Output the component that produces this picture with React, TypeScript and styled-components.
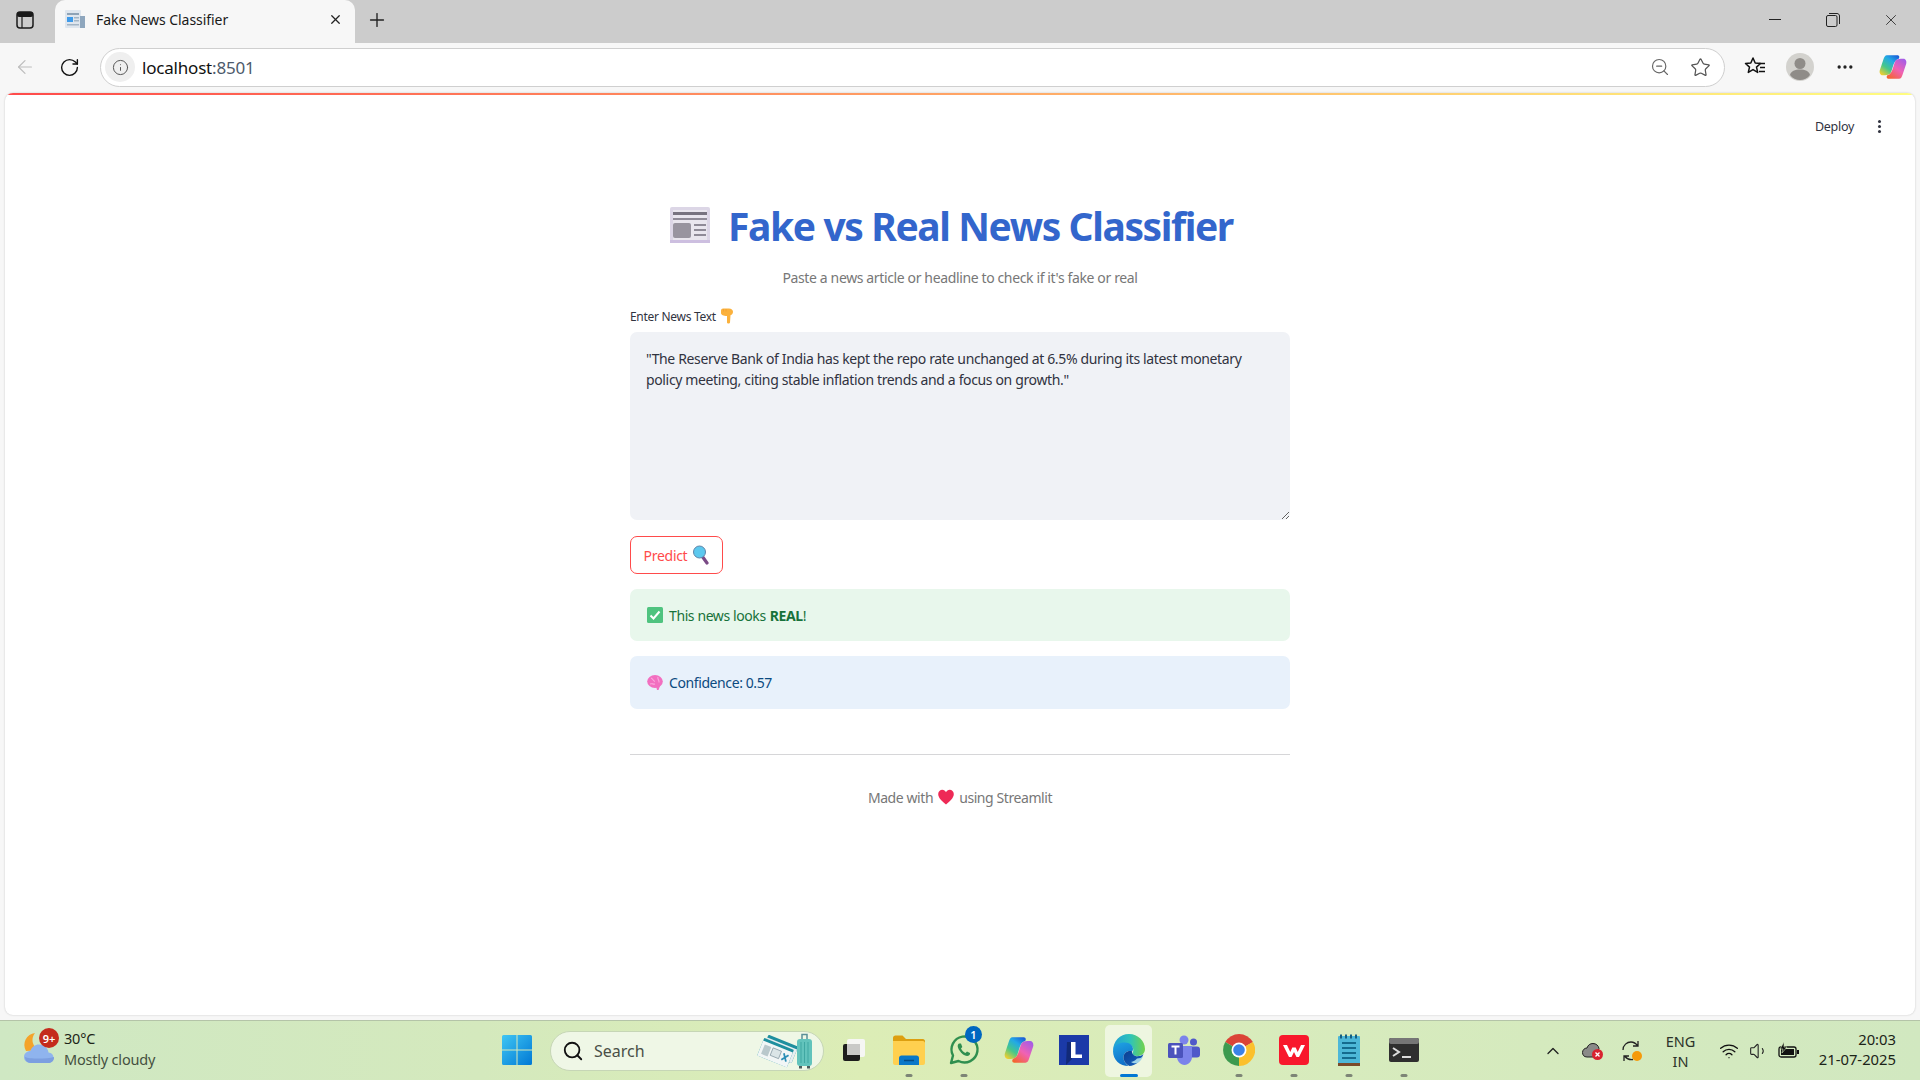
import React from 'react';
import styled, { createGlobalStyle } from 'styled-components';
import { ArrowLeft, ChevronUp, Info, MoreHorizontal, Plus, RotateCw, Search, Star, Volume1, Wifi, X, ZoomOut } from 'lucide-react';

const Global = createGlobalStyle`
  html, body, #root { margin: 0; height: 100%; }
  body { overflow: hidden; background: #f7f7f7; font-family: "Noto Sans", sans-serif; }
  * { box-sizing: border-box; }
`;

const Shell = styled.div`
  width: 1920px;
  height: 1080px;
  display: flex;
  flex-direction: column;
`;

const TabStrip = styled.div`
  height: 43px;
  flex: none;
  background: #cccccc;
  display: flex;
  align-items: stretch;
`;
const SideToggle = styled.div`
  width: 55px;
  display: flex;
  align-items: center;
  justify-content: center;
  padding: 0 6px 4px 0;
`;
const Tab = styled.div`
  width: 300px;
  background: #f7f7f7;
  border-radius: 10px 10px 0 0;
  display: flex;
  align-items: center;
  padding: 0 12px 5px 10px;
  gap: 11px;
`;
const TabTitle = styled.span`
  flex: 1;
  font-size: 14px;
  letter-spacing: -0.05px;
  color: #1a1a1a;
`;
const NewTab = styled.div`
  width: 44px;
  display: flex;
  align-items: center;
  justify-content: center;
  padding-bottom: 4px;
`;
const WindowControls = styled.div`
  margin-left: auto;
  display: flex;
`;
const WindowButton = styled.div`
  width: 58px;
  display: flex;
  align-items: center;
  justify-content: center;
  padding-bottom: 4px;
`;

const Toolbar = styled.div`
  height: 50px;
  flex: none;
  background: #f7f7f7;
  display: flex;
  align-items: center;
  padding-bottom: 2px;
`;
const NavButton = styled.div<{ $w: number }>`
  width: ${p => p.$w}px;
  display: flex;
  justify-content: center;
  align-items: center;
  flex: none;
`;
const AddressBar = styled.div`
  width: 1625px;
  height: 39px;
  margin-left: 10px;
  background: #fff;
  border: 1px solid #cfcfcf;
  border-radius: 20px;
  display: flex;
  align-items: center;
  padding: 0 4px 0 4px;
  flex: none;
`;
const InfoBadge = styled.div`
  width: 30px;
  height: 30px;
  border-radius: 50%;
  background: #efefef;
  display: flex;
  align-items: center;
  justify-content: center;
`;
const Url = styled.div`
  margin-left: 7px;
  flex: 1;
  font-size: 17px;
  letter-spacing: -0.2px;
  color: #111;
`;
const UrlPort = styled.span`
  color: #4d5a6b;
`;

const Page = styled.div`
  flex: 1;
  margin: 0 5px 5px 5px;
  background: #fff;
  border-radius: 8px;
  box-shadow: 0 0 2px rgba(0, 0, 0, 0.22);
  overflow: hidden;
  display: flex;
  flex-direction: column;
  align-items: center;
`;
const Rainbow = styled.div`
  height: 2px;
  width: 100%;
  flex: none;
  background: linear-gradient(90deg, #ff4b4b, #fffd80);
`;
const AppHeader = styled.div`
  width: 100%;
  height: 62px;
  flex: none;
  display: flex;
  align-items: center;
  justify-content: flex-end;
  gap: 24px;
  padding: 0 34px 0 0;
`;
const Deploy = styled.span`
  font-size: 12.5px;
  letter-spacing: -0.3px;
  color: #31333f;
`;
const Kebab = styled.div`
  display: flex;
  flex-direction: column;
  gap: 2px;
  i {
    width: 3px;
    height: 3px;
    border-radius: 50%;
    background: #31333f;
    display: block;
  }
`;

const Column = styled.main`
  width: 660px;
  display: flex;
  flex-direction: column;
`;
const Title = styled.h1`
  margin: 38px 0 0;
  height: 60px;
  display: flex;
  align-items: center;
  justify-content: center;
  gap: 18px;
  font-size: 39px;
  font-weight: 700;
  letter-spacing: -1.4px;
  color: #3366cc;
  padding-right: 17px;
`;
const Subtitle = styled.p`
  margin: 13px 0 0;
  text-align: center;
  font-size: 14px;
  line-height: 20px;
  letter-spacing: -0.37px;
  color: #777;
`;
const Label = styled.div`
  margin-top: 18px;
  height: 20px;
  display: flex;
  align-items: center;
  gap: 4px;
  font-size: 12px;
  letter-spacing: -0.3px;
  color: #31333f;
`;
const NewsInput = styled.textarea`
  margin-top: 6px;
  width: 660px;
  height: 188px;
  border: none;
  outline: none;
  border-radius: 7px;
  background: #f0f2f6;
  padding: 16px 16px;
  font-family: "Noto Sans", sans-serif;
  font-size: 14px;
  line-height: 21px;
  letter-spacing: -0.357px;
  color: #31333f;
  resize: vertical;
`;
const PredictButton = styled.button`
  margin-top: 16px;
  width: 93px;
  height: 38px;
  border: 1px solid #ff4b4b;
  border-radius: 7px;
  background: #fff;
  color: #ff4b4b;
  font-family: "Noto Sans", sans-serif;
  font-size: 14px;
  letter-spacing: -0.3px;
  display: flex;
  align-items: center;
  justify-content: center;
  gap: 6px;
  padding: 0;
`;
const Alert = styled.div<{ $bg: string; $fg: string; $h: number; $mt: number }>`
  margin-top: ${p => p.$mt}px;
  height: ${p => p.$h}px;
  background: ${p => p.$bg};
  color: ${p => p.$fg};
  border-radius: 7px;
  padding: 0 17px;
  display: flex;
  align-items: center;
  gap: 6px;
  font-size: 14px;
  letter-spacing: -0.4px;
  b { font-weight: 700; margin-left: 4px; }
`;
const Divider = styled.hr`
  margin: 45px 0 0;
  border: none;
  border-top: 1px solid #d6d6d8;
  width: 100%;
`;
const Footer = styled.div`
  margin-top: 32px;
  height: 20px;
  display: flex;
  align-items: center;
  justify-content: center;
  gap: 5px;
  font-size: 14px;
  letter-spacing: -0.42px;
  color: #777;
`;

const Taskbar = styled.div`
  height: 60px;
  flex: none;
  border-top: 1px solid #b4c4a8;
  background: linear-gradient(90deg, #cfe8c3 0%, #d4e9bd 25%, #dcedb6 45%, #d7ebbd 70%, #d1e8c0 100%);
  display: flex;
  align-items: center;
`;
const Weather = styled.div`
  width: 489px;
  flex: none;
  display: flex;
  align-items: center;
  padding: 0 0 3px 23px;
  gap: 7px;
`;
const WeatherIcon = styled.div`
  position: relative;
  width: 34px;
  height: 36px;
`;
const Badge = styled.span`
  position: absolute;
  top: -3px;
  right: -2px;
  width: 20px;
  height: 20px;
  border-radius: 50%;
  background: #c42b1c;
  color: #fff;
  font-size: 11px;
  font-weight: 600;
  display: flex;
  align-items: center;
  justify-content: center;
`;
const WeatherText = styled.div`
  font-size: 14.5px;
  line-height: 21px;
  letter-spacing: -0.2px;
  color: #1c2418;
  span { display: block; color: #45503f; }
`;
const Center = styled.div`
  display: flex;
  align-items: center;
`;
const Cell = styled.div<{ $active?: boolean }>`
  position: relative;
  width: 55px;
  height: 54px;
  display: flex;
  align-items: center;
  justify-content: center;
  padding-bottom: 2px;
  &::before {
    content: '';
    position: absolute;
    inset: 1px 4px;
    border-radius: 5px;
    background: ${p => (p.$active ? 'rgba(255,255,255,0.55)' : 'transparent')};
  }
  svg { position: relative; }
`;
const RunDot = styled.i<{ $active?: boolean }>`
  position: absolute;
  bottom: 1px;
  left: 50%;
  transform: translateX(-50%);
  width: ${p => (p.$active ? 18 : 7)}px;
  height: 3px;
  border-radius: 2px;
  background: ${p => (p.$active ? '#0078d4' : '#7d8576')};
`;
const CountBadge = styled.span`
  position: absolute;
  top: 2px;
  right: 9px;
  width: 17px;
  height: 17px;
  border-radius: 50%;
  background: #0067c0;
  color: #fff;
  font-size: 11px;
  font-weight: 600;
  display: flex;
  align-items: center;
  justify-content: center;
`;
const SearchBox = styled.div`
  width: 274px;
  height: 40px;
  margin: 0 2px 0 6px;
  border-radius: 20px;
  background: #eff7e6;
  border: 1px solid #c6d6b6;
  display: flex;
  align-items: center;
  padding: 0 10px 0 11px;
  gap: 10px;
`;
const SearchLabel = styled.span`
  flex: 1;
  font-size: 16px;
  color: #4a4f46;
`;
const Tray = styled.div`
  margin-left: auto;
  display: flex;
  align-items: center;
  padding-right: 24px;
`;
const TrayIcon = styled.div<{ $w: number }>`
  width: ${p => p.$w}px;
  display: flex;
  align-items: center;
  justify-content: center;
`;
const Lang = styled.div`
  width: 59px;
  text-align: center;
  font-size: 14.5px;
  line-height: 20px;
  color: #2c332a;
`;
const Clock = styled.div`
  margin-left: 4px;
  width: 84px;
  padding-bottom: 4px;
  text-align: right;
  font-size: 14.8px;
  line-height: 20px;
  color: #1c2418;
`;

const NewspaperEmoji = ({ size = 40 }: { size?: number }) => (
  <svg width={size} height={size} viewBox="0 0 40 40">
    <rect x="0" y="2" width="40" height="36" rx="2" fill="#dcd6e6" />
    <rect x="0" y="35" width="40" height="3" fill="#cdbfe0" />
    <rect x="3" y="5" width="34" height="30" fill="#e9e6ee" />
    <rect x="3" y="7" width="34" height="3" fill="#77737f" />
    <rect x="3" y="13" width="34" height="2" fill="#8f8b97" />
    <rect x="3" y="18" width="18" height="15" rx="2" fill="#98949f" />
    <rect x="24" y="19" width="12" height="2" fill="#8f8b97" />
    <rect x="24" y="24" width="12" height="2" fill="#8f8b97" />
    <rect x="24" y="29" width="12" height="2" fill="#8f8b97" />
  </svg>
);

const FaviconNews = () => (
  <svg width="20" height="20" viewBox="0 0 20 20">
    <rect x="0" y="1" width="16" height="18" rx="1" fill="#dfe6ee" />
    <rect x="15" y="7" width="5" height="12" fill="#8ea6bd" />
    <rect x="2" y="4" width="12" height="2" fill="#8fa3b6" />
    <rect x="2" y="8" width="6" height="5" fill="#3f9bea" />
    <rect x="9" y="8" width="5" height="1.5" fill="#a4b5c5" />
    <rect x="9" y="11" width="5" height="1.5" fill="#a4b5c5" />
    <rect x="2" y="15" width="12" height="1.5" fill="#a4b5c5" />
  </svg>
);

const PointDown = () => (
  <svg width="14" height="16" viewBox="0 0 14 16">
    <path d="M1 2.500C1 1.200 2 .500 3 .500h6c2.300 0 4 1.500 4 3.300 0 1.800-1 3-2.500 3.500L10 14.500c-.2 1.400-2.800 1.400-3 0V8C3.500 8 1 6.800 1 5z" fill="#fbb13c" />
    <path d="M3.500 1v2.500M6 1v2.500" stroke="#f2a030" strokeWidth="0.800" />
  </svg>
);

const MagnifierEmoji = () => (
  <svg width="16" height="20" viewBox="0 0 16 20">
    <path d="M9 11l5 7" stroke="#7a4a86" strokeWidth="3.200" strokeLinecap="round" />
    <circle cx="6.500" cy="7" r="6" fill="#5cc8ee" stroke="#5e84a8" strokeWidth="1" />
  </svg>
);

const CheckEmoji = () => (
  <svg width="16" height="16" viewBox="0 0 16 16">
    <rect width="16" height="16" rx="1.500" fill="#4fc37f" />
    <path d="M3.500 8.500l3 3 6-7" fill="none" stroke="#fff" strokeWidth="2" />
  </svg>
);

const BrainEmoji = () => (
  <svg width="16" height="17" viewBox="0 0 16 17">
    <g fill="#f26fc0">
      <ellipse cx="8" cy="7.500" rx="7.800" ry="6.500" />
      <path d="M9 12h4l-1.500 4h-1.500z" />
    </g>
    <path d="M4 4c2 .5 2 3 4 3.500M11 3c-1 2 1.500 3 1 5.500M3 10c2-1 3 .5 5 0" fill="none" stroke="#fba9de" strokeWidth="1.100" />
  </svg>
);

const HeartEmoji = () => (
  <svg width="16" height="16" viewBox="0 0 16 16">
    <path d="M8 15.500C4 12.300.200 9 .200 5.100.200 2.500 2.200.800 4.300.800 5.900.800 7.300 1.700 8 3.200 8.700 1.700 10.100.800 11.700.800c2.100 0 4.100 1.700 4.100 4.300C15.800 9 12 12.300 8 15.500z" fill="#ee2a56" />
  </svg>
);

const CopilotLogo = ({ size }: { size: number }) => (
  <svg width={size} height={size} viewBox="0 0 32 31">
    <defs>
      <linearGradient id="cpA" x1="0.850" y1="0" x2="0.150" y2="1">
        <stop offset="0" stopColor="#1a5fd8" />
        <stop offset="0.3" stopColor="#22a9e6" />
        <stop offset="0.65" stopColor="#45c78b" />
        <stop offset="1" stopColor="#f2cf2e" />
      </linearGradient>
      <linearGradient id="cpB" x1="0.850" y1="0" x2="0.150" y2="1">
        <stop offset="0" stopColor="#a25ce8" />
        <stop offset="0.5" stopColor="#f062b4" />
        <stop offset="1" stopColor="#f4652c" />
      </linearGradient>
    </defs>
    <path d="M9 2H21C23 2 24 4 22.500 6 19 7 17.500 10 16.500 13L14 21C13 24 10 25 7 25H4C1.500 25 0 22 1 19L5 7C6 4 7 2 9 2z" fill="url(#cpA)" />
    <path d="M23 29H11C9 29 8 27 9.500 25 13 24 14.500 21 15.500 18L18 10C19 7 22 6 25 6H28C30.500 6 32 9 31 12L27 24C26 27 25 29 23 29z" fill="url(#cpB)" />
  </svg>
);

const ProfileAvatar = () => (
  <svg width="28" height="28" viewBox="0 0 28 28">
    <circle cx="14" cy="14" r="14" fill="#d3d2ce" />
    <circle cx="14" cy="10.500" r="5.500" fill="#8f8c88" />
    <path d="M4 22c1-4 5-5.500 10-5.500S23 18 24 22c-2.500 3.500-6 5-10 5s-7.500-1.500-10-5z" fill="#8f8c88" />
  </svg>
);

const FavoritesIcon = () => (
  <svg width="22" height="22" viewBox="0 0 22 22" fill="none" stroke="#111" strokeWidth="1.500">
    <path d="M9 2l2.200 5 5.300.5-4 3.600 1.200 5.300L9 13.600l-4.700 2.800 1.200-5.300-4-3.600 5.300-.5z" strokeLinejoin="round" />
    <path d="M15 7.500h6M16 11.500h5M15 15.500h6" />
  </svg>
);

const SidebarIcon = () => (
  <svg width="18" height="18" viewBox="0 0 18 18">
    <rect x="1" y="1" width="16" height="16" rx="3" fill="none" stroke="#1a1a1a" strokeWidth="1.500" />
    <rect x="1" y="1" width="16" height="5" rx="2" fill="#1a1a1a" />
    <path d="M6 6v11" stroke="#1a1a1a" strokeWidth="1.200" />
  </svg>
);

const RestoreIcon = () => (
  <svg width="14" height="14" viewBox="0 0 14 14" fill="none" stroke="#222" strokeWidth="1">
    <rect x="0.500" y="2.500" width="10.500" height="11" rx="1.500" />
    <path d="M3 .5h8c1.400 0 2.500 1.100 2.500 2.500v8" />
  </svg>
);

const WeatherGlyph = () => (
  <svg width="34" height="36" viewBox="0 0 34 36">
    <path d="M12 2a11 11 0 0 0 4 17L3 20a12 12 0 0 1 9-18z" fill="#f4a32a" />
    <path d="M8 32c-4 0-7-2.500-7-6s3-6 6.500-6c1-4 4.500-6.500 8.500-6.500 5 0 9 3.500 9.500 8 3 .3 5 2.300 5 5.200S28 32 25 32z" fill="#8fb4ee" />
    <path d="M2 26c4 2 22 2 29 0v1c0 3-3 5-6 5H8c-4 0-6-3-6-6z" fill="#7c9fe0" />
  </svg>
);

const WindowsLogo = () => (
  <svg width="30" height="30" viewBox="0 0 30 30">
    <defs>
      <linearGradient id="winG" x1="0" y1="0" x2="1" y2="1">
        <stop offset="0" stopColor="#3fc6f4" />
        <stop offset="1" stopColor="#0078d4" />
      </linearGradient>
    </defs>
    <path d="M0 1.500A1.500 1.500 0 0 1 1.500 0H14.500V14.500H0zM15.500 0H28.500A1.500 1.500 0 0 1 30 1.500V14.500H15.500zM0 15.500H14.500V30H1.500A1.500 1.500 0 0 1 0 28.500zM15.500 15.500H30V28.500A1.500 1.500 0 0 1 28.500 30H15.500z" fill="url(#winG)" />
  </svg>
);

const TravelArt = () => (
  <svg width="56" height="36" viewBox="0 0 56 36">
    <g transform="rotate(22 20 18)">
      <rect x="6" y="6" width="32" height="18" rx="1" fill="#1f8f9e" />
      <rect x="6" y="9" width="32" height="15" fill="#e6eef0" />
    </g>
    <g transform="rotate(22 18 21)">
      <rect x="2" y="10" width="32" height="19" rx="1" fill="#1f8f9e" />
      <rect x="2" y="13" width="32" height="16" fill="#f2f6f6" />
      <rect x="5" y="16" width="7" height="10" fill="#b9c8cc" />
      <rect x="14" y="16" width="9" height="8" fill="#dbe5e7" stroke="#8397a1" strokeWidth="0.700" />
      <path d="M26 17l5 7m0-7l-5 7" stroke="#2e8fb6" strokeWidth="1.800" />
    </g>
    <path d="M45 6V1.500h5V6" fill="none" stroke="#5b8f98" strokeWidth="1.500" />
    <rect x="40" y="6" width="15" height="27" rx="3" fill="#62c3bc" />
    <path d="M44 9v21M47.500 9v21M51 9v21" stroke="#3fa7a2" strokeWidth="1" />
    <rect x="42" y="33" width="3" height="2.500" fill="#4c5d5d" />
    <rect x="50" y="33" width="3" height="2.500" fill="#4c5d5d" />
  </svg>
);

const TaskViewBox = () => (
  <svg width="24" height="24" viewBox="0 0 24 24">
    <rect x="5" y="1" width="18" height="18" rx="2" fill="#f6f6f4" />
    <rect x="1" y="6" width="17" height="17" rx="2" fill="#1d1d1d" />
    <rect x="5" y="6" width="13" height="11" fill="#c9c9c7" />
  </svg>
);

const FolderIcon = () => (
  <svg width="32" height="30" viewBox="0 0 32 30">
    <path d="M0 3c0-1.500 1-2.500 2.500-2.500h7L13 4h17c1 0 2 1 2 2v3H0z" fill="#dd9f10" />
    <path d="M0 6h30c1 0 2 1 2 2v20c0 1-1 2-2 2H2c-1 0-2-1-2-2z" fill="#ffd04f" />
    <path d="M6 30v-7c0-1.500 1-2.500 2.500-2.500h15c1.500 0 2.500 1 2.500 2.500v7z" fill="#0a78c8" />
    <path d="M11 25.500h10" stroke="#044b85" strokeWidth="1.500" />
  </svg>
);

const WhatsappIcon = () => (
  <svg width="32" height="32" viewBox="0 0 32 32" fill="none">
    <path d="M3 29l2-7.500A13 13 0 1 1 10.500 27z" stroke="#2f8f4f" strokeWidth="2.400" strokeLinejoin="round" />
    <path d="M11 9.500c-2 1.500-1.500 4 .5 7s5 5.500 7.500 5.500c2 0 3.500-1.500 3-3l-3-1.500-1.500 1.500c-2-.8-3.500-2.500-4.500-4.500l1.300-1.500L13 9.500z" fill="#2f8f4f" />
  </svg>
);

const LTile = () => (
  <svg width="30" height="30" viewBox="0 0 30 30">
    <rect width="30" height="30" fill="#1b3aa8" />
    <path d="M7 30l6-6V7H8z" fill="#122a78" />
    <path d="M12 7h4.500v12.500H23V23H12z" fill="#fff" />
  </svg>
);

const EdgeIcon = () => (
  <svg width="32" height="32" viewBox="0 0 32 32">
    <defs>
      <linearGradient id="edA" x1="0" y1="0.500" x2="1" y2="0.500">
        <stop offset="0" stopColor="#1f9fd8" />
        <stop offset="0.55" stopColor="#2fc4b8" />
        <stop offset="1" stopColor="#74d24a" />
      </linearGradient>
      <linearGradient id="edB" x1="0" y1="0" x2="0.300" y2="1">
        <stop offset="0" stopColor="#1fa4e4" />
        <stop offset="1" stopColor="#0f6fc8" />
      </linearGradient>
      <linearGradient id="edC" x1="0" y1="0" x2="1" y2="1">
        <stop offset="0" stopColor="#0c3d8f" />
        <stop offset="1" stopColor="#1266c4" />
      </linearGradient>
    </defs>
    <path d="M16 0C25 0 32 7 32 15c0 4.500-3.500 7-8 7-2.500 0-4.500-.8-4.500-2.500 0-1 .8-1.500.8-3.500 0-4-3.500-6.500-7.800-6.500C7 9.500 2 13 0 17 0 7 7 0 16 0z" fill="url(#edA)" />
    <path d="M0 17C1 11 6 8.500 12 8.500c5 0 8 3 8 6.500 0 1-.3 1.800-.8 2.500-4-1.500-8.700 1-8.700 6 0 3.500 2 6.500 5 8.500C7 32 0 26 0 17z" fill="url(#edB)" />
    <path d="M10.500 23.500c0-5 4.500-7.500 8.500-6.300-.2 2.800 2 5 5.500 5 2 0 4.500-.7 6-2.200C28 27 22 32 16.500 32c-3.500-1.500-6-5-6-8.500z" fill="url(#edC)" />
    <path d="M24 24.500c2.500 0 4.500-.8 6-2-1 2.500-3 5-5.500 6.500-2.500.5-5 .2-6.500-1 2.500-.5 4.500-1.500 6-3.500z" fill="#9ed3e8" />
  </svg>
);

const TeamsIcon = () => (
  <svg width="32" height="30" viewBox="0 0 32 30">
    <circle cx="25.500" cy="7" r="3.500" fill="#5059c9" />
    <rect x="21" y="11.500" width="11" height="11" rx="3" fill="#5059c9" />
    <circle cx="16" cy="5" r="4.500" fill="#7b83eb" />
    <path d="M9 11h15v11c0 4-3.500 8-7.500 8S9 26 9 22z" fill="#7b83eb" />
    <rect x="0" y="8" width="15" height="15" rx="1.500" fill="#4b53bc" />
    <path d="M3.500 11.500h8M7.500 11.500v8" stroke="#fff" strokeWidth="2" />
  </svg>
);

const ChromeIcon = () => (
  <svg width="32" height="32" viewBox="0 0 32 32">
    <path d="M16 16L2.200 8A16 16 0 0 1 29.900 8z" fill="#db4437" />
    <path d="M16 16L29.900 8A16 16 0 0 1 16 32z" fill="#fbc02d" />
    <path d="M16 16V32A16 16 0 0 1 2.200 8z" fill="#3d9a4f" />
    <circle cx="16" cy="16" r="7.500" fill="#fff" />
    <circle cx="16" cy="16" r="5.800" fill="#3b82e8" />
  </svg>
);

const WpsIcon = () => (
  <svg width="30" height="30" viewBox="0 0 30 30">
    <rect width="30" height="30" rx="4" fill="#f8182c" />
    <path d="M4 10l6 12h2.500L15 17l2.500 5H20l6-12h-4l-3.300 7-2-4.500h-3.400l-2 4.500L8 10z" fill="#fff" />
  </svg>
);

const NotepadIcon = () => (
  <svg width="24" height="32" viewBox="0 0 24 32">
    <rect x="1" y="2" width="22" height="28" rx="1" fill="#4db7d8" />
    <rect x="1" y="29" width="22" height="3" fill="#7a4a2a" />
    <path d="M4 .5v4M9 .5v4M14 .5v4M19 .5v4" stroke="#155f80" strokeWidth="2" />
    <path d="M5 9h14M5 14h14M5 19h14M5 24h14" stroke="#146a8e" strokeWidth="1.800" />
  </svg>
);

const TerminalIcon = () => (
  <svg width="30" height="24" viewBox="0 0 30 24">
    <rect width="30" height="24" rx="2" fill="#2f2f2f" />
    <rect width="30" height="6" rx="2" fill="#767676" />
    <path d="M4 10l6 4-6 4" fill="none" stroke="#ddd" strokeWidth="2" />
    <path d="M13 19h9" stroke="#ddd" strokeWidth="2" />
  </svg>
);

const CloudError = () => (
  <svg width="22" height="20" viewBox="0 0 22 20">
    <path d="M5 16c-3 0-4.500-2-4.500-4.500S2.500 7 5 7c1-3 3-4.500 6-4.500 3 0 5.500 2 6 5l-3 8.500z" fill="#8a8a88" stroke="#222" strokeWidth="1" />
    <circle cx="15.500" cy="13.500" r="5.500" fill="#d8232f" />
    <path d="M13.500 11.500l4 4m0-4l-4 4" stroke="#fff" strokeWidth="1.300" />
  </svg>
);

const SyncIcon = () => (
  <svg width="22" height="22" viewBox="0 0 22 22" fill="none" stroke="#222" strokeWidth="1.300">
    <path d="M2 10C2 5 6 2 10 2c3 0 5 1.500 7 4M17 1v5h-5" />
    <path d="M12 19.500c-3 .5-6-.5-8-3M3 21v-5h5" />
    <circle cx="16" cy="16" r="5" fill="#f59a0b" stroke="none" />
  </svg>
);

const BatteryCharging = () => (
  <svg width="22" height="18" viewBox="0 0 22 18">
    <rect x="1" y="5" width="17" height="10" rx="2" fill="none" stroke="#111" strokeWidth="1.300" />
    <rect x="3" y="7" width="13" height="6" fill="#111" />
    <rect x="19" y="8" width="2" height="4" fill="#111" />
    <path d="M6 0L2 7h3L4 11l5-6H6z" fill="#111" stroke="#d4e9bd" strokeWidth="0.600" />
  </svg>
);

export default function App() {
  const newsText = '"The Reserve Bank of India has kept the repo rate unchanged at 6.5% during its latest monetary policy meeting, citing stable inflation trends and a focus on growth."';
  return (
    <Shell>
      <Global />
      <TabStrip>
        <SideToggle><SidebarIcon /></SideToggle>
        <Tab>
          <FaviconNews />
          <TabTitle>Fake News Classifier</TabTitle>
          <X size={15} color="#222" strokeWidth={2} />
        </Tab>
        <NewTab><Plus size={22} color="#222" strokeWidth={1.5} /></NewTab>
        <WindowControls>
          <WindowButton><svg width="12" height="2"><rect width="12" height="1" fill="#222" /></svg></WindowButton>
          <WindowButton><RestoreIcon /></WindowButton>
          <WindowButton><X size={18} color="#222" strokeWidth={1.1} /></WindowButton>
        </WindowControls>
      </TabStrip>

      <Toolbar>
        <NavButton $w={49}><ArrowLeft size={22} color="#bdbdbd" strokeWidth={1.3} /></NavButton>
        <NavButton $w={41}><RotateCw size={21} color="#111" strokeWidth={1.6} /></NavButton>
        <AddressBar>
          <InfoBadge><Info size={17} color="#555" strokeWidth={1.4} /></InfoBadge>
          <Url>localhost<UrlPort>:8501</UrlPort></Url>
          <NavButton $w={40}><ZoomOut size={20} color="#666" strokeWidth={1.4} /></NavButton>
          <NavButton $w={40}><Star size={21} color="#555" strokeWidth={1.4} /></NavButton>
        </AddressBar>
        <NavButton $w={60}><FavoritesIcon /></NavButton>
        <NavButton $w={30}><ProfileAvatar /></NavButton>
        <NavButton $w={60}><MoreHorizontal size={20} color="#222" /></NavButton>
        <NavButton $w={36}><CopilotLogo size={28} /></NavButton>
      </Toolbar>

      <Page>
        <Rainbow />
        <AppHeader>
          <Deploy>Deploy</Deploy>
          <Kebab><i /><i /><i /></Kebab>
        </AppHeader>
        <Column>
          <Title><NewspaperEmoji />Fake vs Real News Classifier</Title>
          <Subtitle>Paste a news article or headline to check if it's fake or real</Subtitle>
          <Label>Enter News Text <PointDown /></Label>
          <NewsInput readOnly defaultValue={newsText} />
          <PredictButton>Predict <MagnifierEmoji /></PredictButton>
          <Alert $bg="#e8f7ec" $fg="#17723a" $h={52} $mt={15}>
            <CheckEmoji /><span>This news looks<b>REAL</b>!</span>
          </Alert>
          <Alert $bg="#e8f1fb" $fg="#0b4a80" $h={53} $mt={15}>
            <BrainEmoji /><span>Confidence: 0.57</span>
          </Alert>
          <Divider />
          <Footer>Made with <HeartEmoji /> using Streamlit</Footer>
        </Column>
      </Page>

      <Taskbar>
        <Weather>
          <WeatherIcon><WeatherGlyph /><Badge>9+</Badge></WeatherIcon>
          <WeatherText>30°C<span>Mostly cloudy</span></WeatherText>
        </Weather>
        <Center>
          <Cell><WindowsLogo /></Cell>
          <SearchBox>
            <Search size={22} color="#111" strokeWidth={2} />
            <SearchLabel>Search</SearchLabel>
            <TravelArt />
          </SearchBox>
          <Cell><TaskViewBox /></Cell>
          <Cell><FolderIcon /><RunDot /></Cell>
          <Cell><WhatsappIcon /><CountBadge>1</CountBadge><RunDot /></Cell>
          <Cell><CopilotLogo size={30} /></Cell>
          <Cell><LTile /></Cell>
          <Cell $active><EdgeIcon /><RunDot $active /></Cell>
          <Cell><TeamsIcon /></Cell>
          <Cell><ChromeIcon /><RunDot /></Cell>
          <Cell><WpsIcon /><RunDot /></Cell>
          <Cell><NotepadIcon /><RunDot /></Cell>
          <Cell><TerminalIcon /><RunDot /></Cell>
        </Center>
        <Tray>
          <TrayIcon $w={40}><ChevronUp size={20} color="#222" strokeWidth={1.6} /></TrayIcon>
          <TrayIcon $w={40}><CloudError /></TrayIcon>
          <TrayIcon $w={38}><SyncIcon /></TrayIcon>
          <Lang>ENG<br />IN</Lang>
          <TrayIcon $w={38}><Wifi size={20} color="#111" strokeWidth={1.6} /></TrayIcon>
          <TrayIcon $w={22}><Volume1 size={20} color="#222" strokeWidth={1.3} /></TrayIcon>
          <TrayIcon $w={38}><BatteryCharging /></TrayIcon>
          <Clock>20:03<br />21-07-2025</Clock>
        </Tray>
      </Taskbar>
    </Shell>
  );
}
